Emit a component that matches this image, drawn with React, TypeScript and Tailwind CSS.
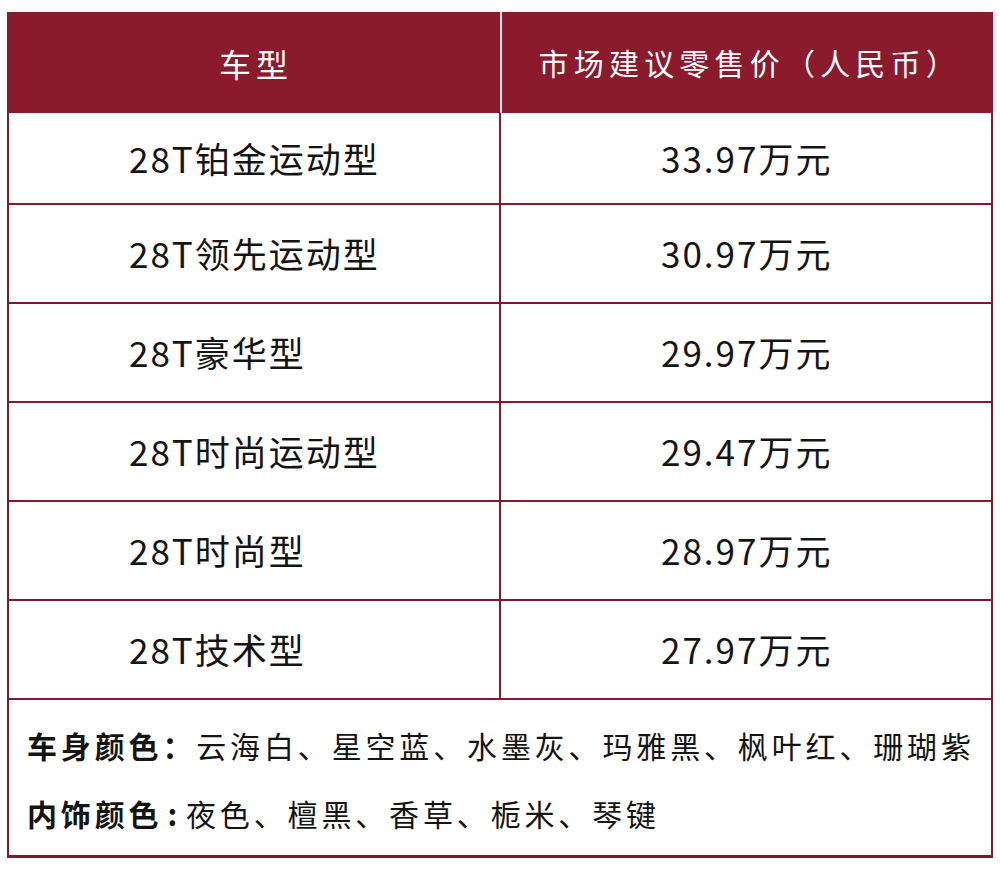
const rows = [
  { name: '28T铂金运动型', price: '33.97万元' },
  { name: '28T领先运动型', price: '30.97万元' },
  { name: '28T豪华型', price: '29.97万元' },
  { name: '28T时尚运动型', price: '29.47万元' },
  { name: '28T时尚型', price: '28.97万元' },
  { name: '28T技术型', price: '27.97万元' },
];

const font = { fontFamily: '"Noto Sans CJK SC", "Noto Sans", sans-serif' };

export default function App() {
  return (
    <div className="min-h-[870px] bg-white pt-[12px] pl-[7px]" style={font}>
      <div className="w-[986px] border-x-2 border-b-[3px] border-[#7e1b2e]">
        {/* header */}
        <div className="flex h-[101px] bg-[#8a1a2c] text-white -mx-[2px]">
          <div className="flex w-[493px] items-center justify-center text-[32px] tracking-[5px] pl-[5px]">
            车型
          </div>
          <div className="w-[1.5px] bg-[#f3dfe2]" />
          <div className="flex flex-1 items-center justify-center text-[30px] tracking-[5.2px] pl-[5px]">
            市场建议零售价（人民币）
          </div>
        </div>

        {rows.map((r, i) => (
          <div
            key={r.name}
            className={`flex border-b-2 border-[#7e1b2e] text-[#141414] text-[35px] tracking-[2px] ${i === 0 ? 'h-[92px]' : 'h-[99px]'}`}
          >
            <div className="flex w-[490px] items-center pl-[120px]">{r.name}</div>
            <div className="w-[2px] bg-[#7e1b2e]" />
            <div className="flex flex-1 items-center pl-[160px]">{r.price}</div>
          </div>
        ))}

        {/* colours */}
        <div className="h-[155px] pt-[11px] pl-[18px] text-[30px] leading-[68px] tracking-[3.85px] text-[#141414]">
          <div>
            <span className="font-bold">车身颜色：</span>
            云海白、星空蓝、水墨灰、玛雅黑、枫叶红、珊瑚紫
          </div>
          <div>
            <span className="font-bold">
              内饰颜色<span className="mx-[5px]">:</span>
            </span>
            夜色、檀黑、香草、栀米、琴键
          </div>
        </div>
      </div>
    </div>
  );
}
